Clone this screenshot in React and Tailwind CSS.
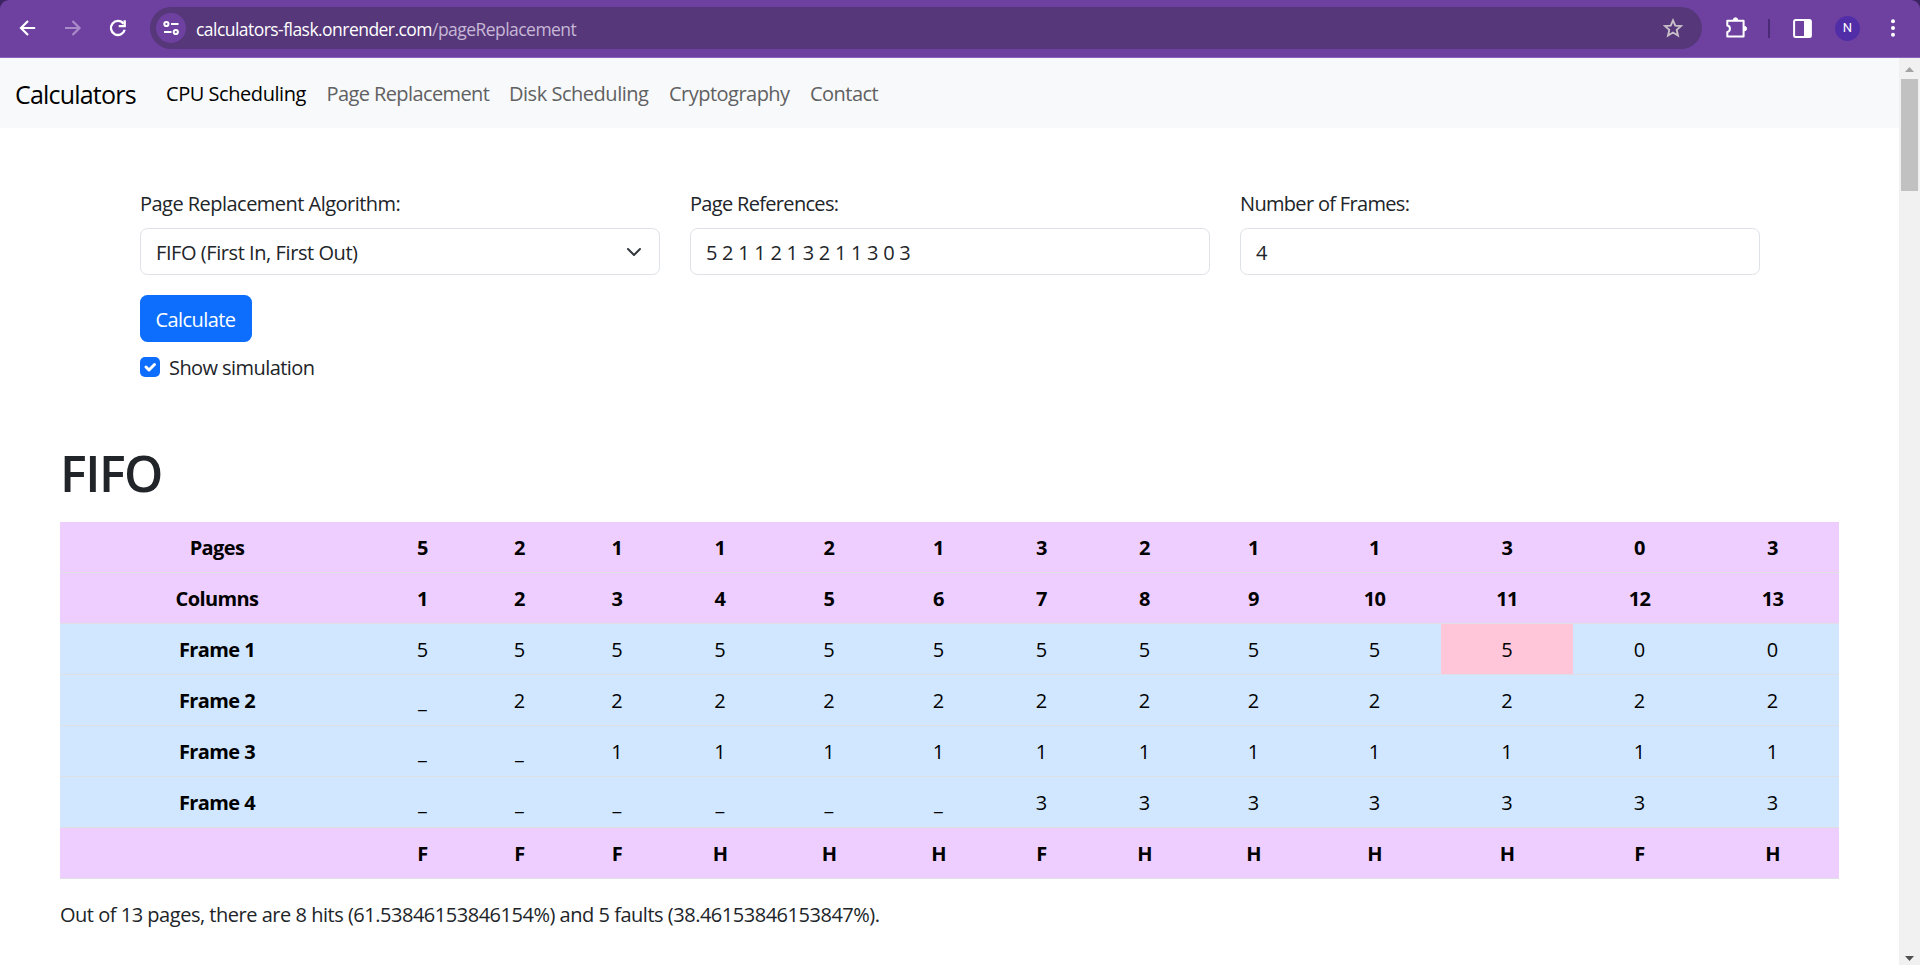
import React from 'react';

const NAV = [
  ['Page Replacement', 'mr-[20px] w-[162.5px] tracking-[-0.6px] text-[#606162]'],
  ['Disk Scheduling', 'mr-[20px] w-[140px] tracking-[-0.47px] text-[#606162]'],
  ['Cryptography', 'mr-[20px] w-[121px] tracking-[-0.52px] text-[#606162]'],
  ['Contact', 'w-[70px] tracking-[-0.53px] text-[#606162]'],
];

const COLS = [314, 97, 97, 98, 108, 110, 109, 97, 109, 109, 133, 132, 133, 133];

const HEAD = [
  ['Pages', '5', '2', '1', '1', '2', '1', '3', '2', '1', '1', '3', '0', '3'],
  ['Columns', '1', '2', '3', '4', '5', '6', '7', '8', '9', '10', '11', '12', '13'],
];
const FRAMES = [
  ['Frame 1', '5', '5', '5', '5', '5', '5', '5', '5', '5', '5', '5', '0', '0'],
  ['Frame 2', '_', '2', '2', '2', '2', '2', '2', '2', '2', '2', '2', '2', '2'],
  ['Frame 3', '_', '_', '1', '1', '1', '1', '1', '1', '1', '1', '1', '1', '1'],
  ['Frame 4', '_', '_', '_', '_', '_', '_', '3', '3', '3', '3', '3', '3', '3'],
];
const RESULT = ['', 'F', 'F', 'F', 'H', 'H', 'H', 'F', 'H', 'H', 'H', 'H', 'F', 'H'];

function Toolbar() {
  return (
    <div className="bg-[#3b2460]">
      <header className="flex h-[58px] items-start rounded-t-[9px] border-b border-[#8b62bd] bg-[#6e41a1] pl-[16px] pt-[7px]">
        <div className="flex h-[42px] items-center">
          <svg className="mr-[21px] size-[24px]" viewBox="0 0 24 24" fill="none" stroke="#fff" strokeWidth="2.2">
            <path d="M19.200 12H5.500M12 5l-7 7 7 7" />
          </svg>
          <svg className="mr-[21px] size-[24px]" viewBox="0 0 24 24" fill="none" stroke="#a98bc9" strokeWidth="2.2">
            <path d="M4 12h14M11.500 5l7 7-7 7" />
          </svg>
          <svg className="mr-[20px] size-[24px]" viewBox="0 0 24 24" fill="none" stroke="#fff" strokeWidth="2.300">
            <path d="M17.500 7.700A7 7 0 1 0 18.700 13.800" />
            <path d="M18.700 4.200v6h-6" />
          </svg>
        </div>
        <div className="flex h-[42px] w-[1552px] items-center rounded-full bg-[#563779] pl-[6px] pr-[18px]">
          <div className="flex size-[30px] items-center justify-center rounded-full bg-[#6e41a1]">
            <svg className="size-[18px]" viewBox="0 0 18 18" fill="none" stroke="#fff" strokeWidth="2">
              <circle cx="4.400" cy="5" r="2.100" />
              <path d="M9 5h7.500M2 13h7.500" />
              <circle cx="13.800" cy="13" r="2.100" />
            </svg>
          </div>
          <div className="ml-[10px] flex-1 whitespace-nowrap pt-px text-[17.5px] leading-[24px] text-[#c6b8d6]">
            <span className="tracking-[-0.54px] text-white">calculators-flask.onrender.com</span>
            <span className="tracking-[-0.54px]">/pageReplacement</span>
          </div>
          <svg className="size-[22px]" viewBox="0 0 22 22" fill="none" stroke="#c8c0c8" strokeWidth="1.900">
            <path d="M11 3.400l2.300 5.200 5.700.5-4.300 3.800 1.300 5.600-5-3-5 3 1.300-5.600L3 9.100l5.700-.5z" />
          </svg>
        </div>
        <div className="flex h-[42px] items-center">
          <svg className="ml-[23px] size-[24px]" viewBox="0 0 24 24" fill="none" stroke="#fff" strokeWidth="2" strokeLinejoin="round">
            <path d="M2.300 4.800H18.600v15.700H2.300v-4.600a3.200 3.200 0 0 0 0-6.300z" />
            <path d="M8.300 4a2.200 2.200 0 0 1 4.400 0zM19.400 10.400a2.200 2.200 0 0 1 0 4.400z" fill="#fff" strokeWidth="1" />
          </svg>
          <div className="ml-[19px] h-[19px] w-[2px] bg-[#4b2b78]" />
          <svg className="ml-[23px] size-[19px]" viewBox="0 0 19 19">
            <rect x="1.100" y="1.100" width="16.800" height="16.800" rx="1.500" fill="none" stroke="#fff" strokeWidth="2" />
            <path d="M11 1h7v17h-7z" fill="#fff" />
          </svg>
          <div className="ml-[23px] flex size-[25px] items-center justify-center rounded-full bg-[#512da8] font-[Roboto] text-[13px] text-white">N</div>
          <svg className="ml-[31px] h-[18px] w-[4px]" viewBox="0 0 4 18" fill="#fff">
            <circle cx="2" cy="2.200" r="2" />
            <circle cx="2" cy="9" r="2" />
            <circle cx="2" cy="15.800" r="2" />
          </svg>
        </div>
      </header>
    </div>
  );
}

function Field({ label, labelClass, children }) {
  return (
    <div className="w-[520px] shrink-0">
      <div className={'mb-[9px] pt-px text-[20px] leading-[30px] ' + labelClass}>{label}</div>
      <div className="flex h-[47px] items-center justify-between rounded-[7.5px] border border-[#dee2e6] px-[15px]">{children}</div>
    </div>
  );
}

function Row({ cells, tone, bold, hot }) {
  return (
    <tr className={tone}>
      {cells.map((c, i) =>
        i === 0 || bold ? (
          <th key={i} className="h-[51px] border-b border-[#dee0e3] p-0 pt-[2px] text-center font-bold tracking-[-0.6px]">{c}</th>
        ) : (
          <td key={i} className={i === hot ? 'h-[51px] border-b border-[#dee0e3] bg-[#ffc6da] p-0 pt-[2px] text-center' : 'h-[51px] border-b border-[#dee0e3] p-0 pt-[2px] text-center'}>{c}</td>
        )
      )}
    </tr>
  );
}

function Scrollbar() {
  return (
    <div className="flex w-[21px] flex-col items-center bg-[#f1f1f1]">
      <svg className="h-[21px] w-[21px]" viewBox="0 0 21 21"><path d="M6 14l4.500-5 4.500 5z" fill="#a3a3a3" /></svg>
      <div className="h-[112px] w-[17px] bg-[#c1c1c1]" />
      <div className="flex-1" />
      <svg className="h-[21px] w-[21px]" viewBox="0 0 21 21"><path d="M6 12l4.500 5 4.500-5z" fill="#505050" /></svg>
    </div>
  );
}

export default function App() {
  return (
    <div className="flex h-[965px] w-[1920px] flex-col overflow-hidden bg-white font-['Open_Sans',sans-serif] text-[20px] leading-[30px] text-[#212529]">
      <Toolbar />
      <div className="flex min-h-0 flex-1">
        <main className="min-w-0 flex-1">
          <nav className="flex h-[70px] items-center whitespace-nowrap bg-[#f8f9fa] pl-[15px] pt-[2px]">
            <a className="w-[151px] text-[25px] tracking-[-0.8px] text-black">Calculators</a>
            <a className="mr-[20px] w-[140.5px] tracking-[-0.45px] text-black">CPU Scheduling</a>
            {NAV.map(([t, cls]) => (
              <a key={t} className={cls}>{t}</a>
            ))}
          </nav>

          <section className="pl-[140px] pt-[60px]">
            <div className="flex gap-[30px]">
              <Field label="Page Replacement Algorithm:" labelClass="tracking-[-0.53px]">
                <span className="pt-[2px] tracking-[-0.43px]">FIFO (First In, First Out)</span>
                <svg className="mr-[2px] size-[16px]" viewBox="0 0 16 16" fill="none" stroke="#343a40" strokeWidth="2" strokeLinecap="round" strokeLinejoin="round"><path d="M2 5l6 6 6-6" /></svg>
              </Field>
              <Field label="Page References:" labelClass="tracking-[-0.68px]">
                <span className="pt-[2px] tracking-[-0.26px]">5 2 1 1 2 1 3 2 1 1 3 0 3</span>
              </Field>
              <Field label="Number of Frames:" labelClass="tracking-[-0.68px]">
                <span className="pt-[2px]">4</span>
              </Field>
            </div>
            <button className="mt-[20px] flex h-[47px] w-[112px] items-center justify-center rounded-[7.5px] bg-[#0d6efd] pr-px pt-[2px] tracking-[-0.56px] text-white">Calculate</button>
            <label className="mt-[10px] flex h-[30px] items-center">
              <span className="flex size-[20px] items-center justify-center rounded-[5px] bg-[#0d6efd]">
                <svg className="size-[20px]" viewBox="0 0 20 20" fill="none" stroke="#fff" strokeWidth="3" strokeLinecap="round" strokeLinejoin="round"><path d="M6 10l3 3 5.500-5.500" /></svg>
              </span>
              <span className="ml-[9px] pt-[2px] tracking-[-0.57px]">Show simulation</span>
            </label>
          </section>

          <section className="px-[60px] pt-[60px]">
            <h1 className="pt-px text-[50px] font-semibold leading-[60px] tracking-[-1.5px]">FIFO</h1>
            <table className="mt-[19px] w-[1779px] table-fixed border-separate border-spacing-0 text-black">
              <colgroup>{COLS.map((w, i) => <col key={i} style={{ width: w }} />)}</colgroup>
              <tbody>
                {HEAD.map((r) => <Row key={r[0]} cells={r} tone="bg-[#eeceff]" bold />)}
                {FRAMES.map((r, i) => <Row key={r[0]} cells={r} tone="bg-[#d0e7ff]" hot={i === 0 ? 11 : -1} />)}
                <Row cells={RESULT} tone="bg-[#eeceff]" bold />
              </tbody>
            </table>
            <p className="mt-[21px] whitespace-nowrap tracking-[-0.48px]">Out of 13 pages, there are 8 hits (61.53846153846154%) and 5 faults (38.46153846153847%).</p>
          </section>
        </main>
        <Scrollbar />
      </div>
    </div>
  );
}
